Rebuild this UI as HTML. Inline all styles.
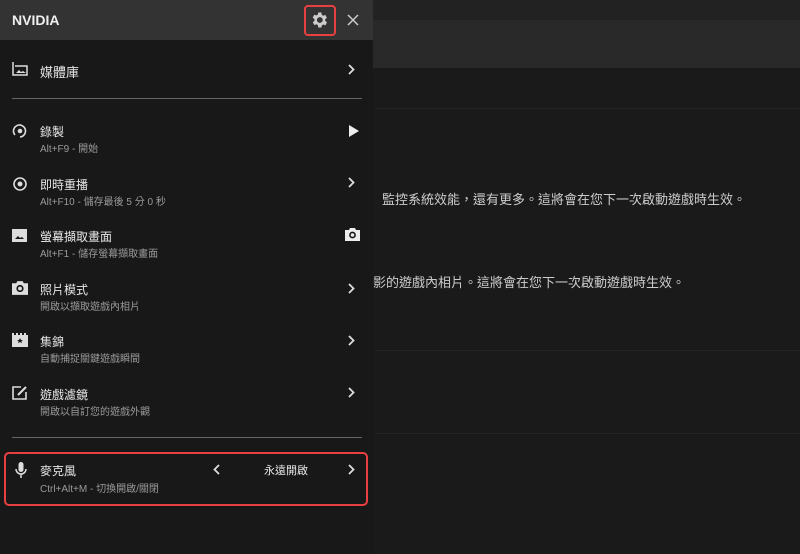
<!DOCTYPE html>
<html><head><meta charset="utf-8"><style>
*{margin:0;padding:0;box-sizing:border-box}
body{width:800px;height:554px;background:#1a1a1a;overflow:hidden;position:relative;font-family:"Liberation Sans","Noto Sans CJK TC",sans-serif;color:#ddd}
.r{position:absolute}
.panel{left:0;top:0;width:373px;height:554px;background:#181818}
.hdr{left:0;top:0;width:373px;height:40px;background:#333}
.t{position:absolute;font-size:12px;color:#e8e8e8}
.s{position:absolute;font-size:10px;color:#9a9a9a}
.ic{position:absolute;left:12px}
</style></head><body>
<div class="r" style="left:373px;top:0;width:427px;height:20px;background:#222"></div>
<div class="r" style="left:373px;top:20px;width:427px;height:48px;background:#292929"></div>
<div class="r" style="left:376px;top:108px;width:424px;height:1px;background:#262626"></div>
<div class="r" style="left:376px;top:350px;width:424px;height:1px;background:#262626"></div>
<div class="r" style="left:376px;top:433px;width:424px;height:1px;background:#262626"></div>
<div class="t" style="left:382px;top:189px;font-size:13px;color:#ccc">監控系統效能，還有更多。這將會在您下一次啟動遊戲時生效。</div>
<div class="t" style="left:373px;top:272px;font-size:13px;color:#ccc">影的遊戲內相片。這將會在您下一次啟動遊戲時生效。</div>

<div class="r panel"></div>
<div class="r hdr"></div>
<div class="t" style="left:12px;top:12px;font-size:14px;font-weight:bold;color:#f0f0f0">NVIDIA</div>
<div class="r" style="left:304px;top:5px;width:32px;height:31px;border:2px solid #e84040;border-radius:4px"></div>
<svg class="r" style="left:309px;top:10px" width="20" height="20" viewBox="0 0 24 24"><path fill="#ccc" d="M19.4 13a7.5 7.5 0 000-2l2.1-1.6-2-3.5-2.5 1a7.6 7.6 0 00-1.7-1L15 3h-4l-.4 2.6a7.6 7.6 0 00-1.7 1l-2.5-1-2 3.5L6.6 11a7.5 7.5 0 000 2l-2.1 1.6 2 3.5 2.5-1a7.6 7.6 0 001.7 1L11 21h4l.4-2.6a7.6 7.6 0 001.7-1l2.5 1 2-3.5zM13 15.5a3.5 3.5 0 110-7 3.5 3.5 0 010 7z"/></svg>
<svg class="r" style="left:347px;top:14px" width="12" height="12" viewBox="0 0 12 12"><path stroke="#ccc" stroke-width="1.5" d="M1 1l10 10M11 1L1 11"/></svg>

<svg class="ic r" style="top:62px" width="16" height="14" viewBox="0 0 16 14"><path fill="none" stroke="#ddd" stroke-width="1.5" d="M1 0v13h14V4H3"/><path fill="#ddd" d="M4 11l3-3 2 2 2-1 3 2z"/></svg>
<div class="t" style="left:40px;top:62px;font-size:13px">媒體庫</div>
<svg class="r" style="left:348px;top:64px" width="7" height="11" viewBox="0 0 7 11"><path fill="none" stroke="#ddd" stroke-width="1.8" d="M1 1l4.5 4.5L1 10"/></svg>
<div class="r" style="left:12px;top:98px;width:350px;height:1px;background:#666"></div>

<svg class="ic r" style="top:123px" width="16" height="16" viewBox="0 0 16 16"><path fill="none" stroke="#ddd" stroke-width="1.6" d="M3 12A6 6 0 1 1 8 14"/><circle cx="8" cy="8" r="2.3" fill="#ddd"/></svg>
<div class="t" style="left:40px;top:123px">錄製</div><div class="s" style="left:40px;top:140px">Alt+F9 - 開始</div>
<svg class="r" style="left:349px;top:125px" width="10" height="12" viewBox="0 0 10 12"><path fill="#eee" d="M0 0l10 6-10 6z"/></svg>

<svg class="ic r" style="top:176px" width="16" height="16" viewBox="0 0 16 16"><circle cx="8" cy="8" r="6" fill="none" stroke="#ddd" stroke-width="1.6"/><circle cx="8" cy="8" r="2.5" fill="#ddd"/></svg>
<div class="t" style="left:40px;top:176px">即時重播</div><div class="s" style="left:40px;top:193px">Alt+F10 - 儲存最後 5 分 0 秒</div>
<svg class="r" style="left:348px;top:177px" width="7" height="11" viewBox="0 0 7 11"><path fill="none" stroke="#ddd" stroke-width="1.8" d="M1 1l4.5 4.5L1 10"/></svg>

<svg class="ic r" style="top:229px" width="15" height="13" viewBox="0 0 15 13"><rect width="15" height="13" fill="#ddd"/><path fill="#181818" d="M3 10l3-3 2 2 2-1 2 2z"/></svg>
<div class="t" style="left:40px;top:228px">螢幕擷取畫面</div><div class="s" style="left:40px;top:245px">Alt+F1 - 儲存螢幕擷取畫面</div>
<svg class="r" style="left:345px;top:228px" width="15" height="13" viewBox="0 0 15 13"><path fill="#eee" d="M0 2h4l1-2h5l1 2h4v11H0z"/><circle cx="7.5" cy="7" r="2.6" fill="none" stroke="#181818" stroke-width="1.6"/></svg>

<svg class="ic r" style="top:281px" width="16" height="14" viewBox="0 0 15 13"><path fill="#ddd" d="M0 2h4l1-2h5l1 2h4v11H0z"/><circle cx="7.5" cy="7" r="2.6" fill="none" stroke="#181818" stroke-width="1.6"/></svg>
<div class="t" style="left:40px;top:281px">照片模式</div><div class="s" style="left:40px;top:298px">開啟以擷取遊戲內相片</div>
<svg class="r" style="left:348px;top:283px" width="7" height="11" viewBox="0 0 7 11"><path fill="none" stroke="#ddd" stroke-width="1.8" d="M1 1l4.5 4.5L1 10"/></svg>

<svg class="ic r" style="top:333px" width="16" height="14" viewBox="0 0 16 14"><path fill="#ddd" d="M0 0h2v2h2V0h2v2h2V0h2v2h2V0h2v2h2v12H0z"/><path fill="#181818" d="M8 5l1 2h2l-1.6 1.3.6 2L8 9l-2 1.3.6-2L5 7h2z"/></svg>
<div class="t" style="left:40px;top:333px">集錦</div><div class="s" style="left:40px;top:350px">自動捕捉關鍵遊戲瞬間</div>
<svg class="r" style="left:348px;top:335px" width="7" height="11" viewBox="0 0 7 11"><path fill="none" stroke="#ddd" stroke-width="1.8" d="M1 1l4.5 4.5L1 10"/></svg>

<svg class="ic r" style="top:385px" width="16" height="15" viewBox="0 0 16 15"><path fill="none" stroke="#ddd" stroke-width="1.6" d="M9 2H1v12h13V7"/><path stroke="#ddd" stroke-width="2" d="M6 10l8-8"/></svg>
<div class="t" style="left:40px;top:386px">遊戲濾鏡</div><div class="s" style="left:40px;top:403px">開啟以自訂您的遊戲外觀</div>
<svg class="r" style="left:348px;top:387px" width="7" height="11" viewBox="0 0 7 11"><path fill="none" stroke="#ddd" stroke-width="1.8" d="M1 1l4.5 4.5L1 10"/></svg>
<div class="r" style="left:12px;top:437px;width:350px;height:1px;background:#666"></div>

<div class="r" style="left:4px;top:452px;width:364px;height:54px;border:2px solid #e84040;border-radius:5px"></div>
<svg class="r" style="left:15px;top:462px" width="12" height="16" viewBox="0 0 12 16"><rect x="3.5" y="0" width="5" height="10" rx="2.5" fill="#ddd"/><path fill="none" stroke="#ddd" stroke-width="1.5" d="M1 7a5 5 0 0010 0M6 12v4"/></svg>
<div class="t" style="left:40px;top:462px">麥克風</div><div class="s" style="left:40px;top:480px">Ctrl+Alt+M - 切換開啟/關閉</div>
<svg class="r" style="left:213px;top:464px" width="7" height="11" viewBox="0 0 7 11"><path fill="none" stroke="#ddd" stroke-width="1.8" d="M6 1L1.5 5.5 6 10"/></svg>
<div class="t" style="left:264px;top:462px;font-size:11px">永遠開啟</div>
<svg class="r" style="left:348px;top:464px" width="7" height="11" viewBox="0 0 7 11"><path fill="none" stroke="#ddd" stroke-width="1.8" d="M1 1l4.5 4.5L1 10"/></svg>
</body></html>
